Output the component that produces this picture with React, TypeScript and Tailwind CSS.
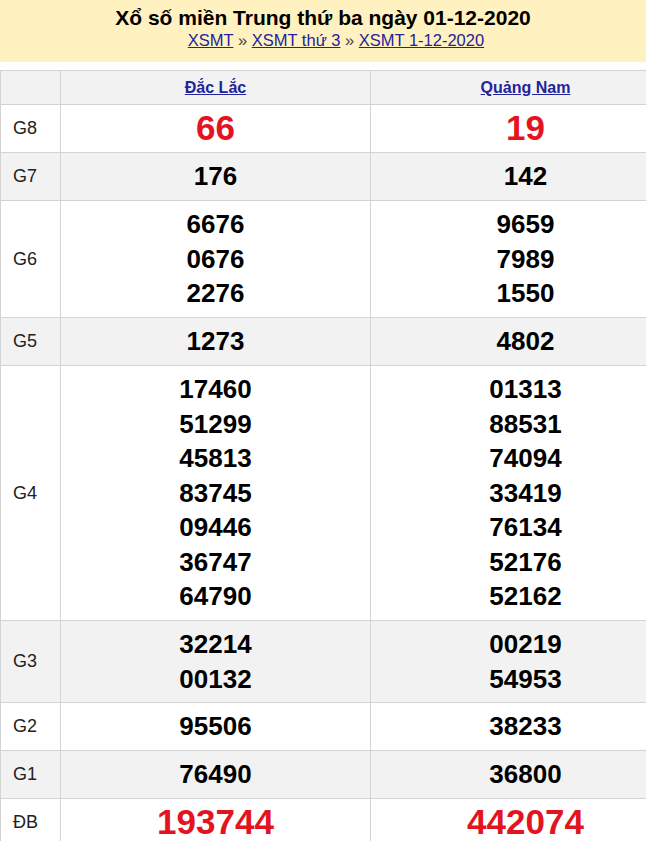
import type { FC } from 'react';

type Row = { label: string; a: string[]; b: string[]; h: string; big?: boolean; shade?: boolean };

const rows: Row[] = [
  { label: 'G8', a: ['66'], b: ['19'], h: 'h-[48px]', big: true },
  { label: 'G7', a: ['176'], b: ['142'], h: 'h-[48px]', shade: true },
  { label: 'G6', a: ['6676', '0676', '2276'], b: ['9659', '7989', '1550'], h: 'h-[117px]' },
  { label: 'G5', a: ['1273'], b: ['4802'], h: 'h-[48px]', shade: true },
  {
    label: 'G4',
    a: ['17460', '51299', '45813', '83745', '09446', '36747', '64790'],
    b: ['01313', '88531', '74094', '33419', '76134', '52176', '52162'],
    h: 'h-[255px]',
  },
  { label: 'G3', a: ['32214', '00132'], b: ['00219', '54953'], h: 'h-[82px]', shade: true },
  { label: 'G2', a: ['95506'], b: ['38233'], h: 'h-[48px]' },
  { label: 'G1', a: ['76490'], b: ['36800'], h: 'h-[48px]', shade: true },
  { label: 'ĐB', a: ['193744'], b: ['442074'], h: 'h-[48px]', big: true },
];

const Cell: FC<{ nums: string[]; big?: boolean }> = ({ nums, big }) => (
  <td className="border border-[#d3d3d3] p-0 text-center align-middle">
    {nums.map((n) => (
      <div
        key={n}
        className={
          big
            ? 'text-[35px] leading-[34.5px] font-bold text-[#e3141f]'
            : 'text-[26px] leading-[34.5px] font-bold text-black'
        }
      >
        {n}
      </div>
    ))}
  </td>
);

export default function App() {
  return (
    <div className="w-[646px] h-[841px] overflow-hidden bg-white font-['Liberation_Sans',Arial,sans-serif]">
      <div className="h-[62px] bg-[#fff2c0] flex flex-col items-center pt-[5px]">
        <h1 className="text-[21px] leading-[25px] font-bold text-black">Xổ số miền Trung thứ ba ngày 01-12-2020</h1>
        <div className="pl-[26px] text-[16.5px] leading-[21px] text-[#444]">
          <a href="#" className="text-[#23239a] underline">XSMT</a> »{' '}
          <a href="#" className="text-[#23239a] underline">XSMT thứ 3</a> »{' '}
          <a href="#" className="text-[#23239a] underline">XSMT 1-12-2020</a>
        </div>
      </div>

      <table className="mt-[8px] w-[680px] border-collapse table-fixed">
        <colgroup>
          <col className="w-[60px]" />
          <col className="w-[310px]" />
          <col className="w-[310px]" />
        </colgroup>
        <thead>
          <tr className="bg-[#f2f2f2] h-[34px]">
            <th className="border border-[#d3d3d3] p-0" />
            <th className="border border-[#d3d3d3] p-0 text-[16px] font-bold">
              <a href="#" className="text-[#23239a] underline">Đắc Lắc</a>
            </th>
            <th className="border border-[#d3d3d3] p-0 text-[16px] font-bold">
              <a href="#" className="text-[#23239a] underline">Quảng Nam</a>
            </th>
          </tr>
        </thead>
        <tbody>
          {rows.map((r) => (
            <tr key={r.label} className={`${r.h} ${r.shade ? 'bg-[#f2f2f2]' : 'bg-white'}`}>
              <td className="border border-[#d3d3d3] p-0 pl-[12px] text-[18px] text-[#222] align-middle">{r.label}</td>
              <Cell nums={r.a} big={r.big} />
              <Cell nums={r.b} big={r.big} />
            </tr>
          ))}
        </tbody>
      </table>
    </div>
  );
}
